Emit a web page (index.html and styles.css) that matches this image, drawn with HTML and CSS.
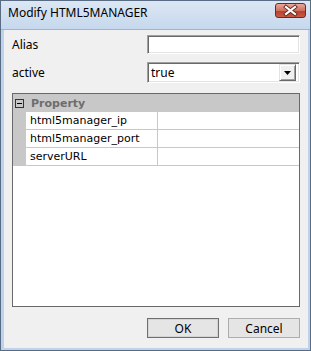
FILE: index.html
```html
<!DOCTYPE html>
<html lang="en">
<head>
    <meta charset="UTF-8">
    <title>Modify HTML5MANAGER</title>
    <link rel="stylesheet" href="styles.css">
</head>
<body>
    <div class="window">
        <!-- Titelleiste -->
        <div class="titlebar">
            <span class="title">Modify HTML5MANAGER</span>
            <span class="close">
                <svg width="29" height="13" viewBox="0 0 29 13">
                    <path d="M10 3 L19 10 M19 3 L10 10" stroke="#5e2a22" stroke-width="4" stroke-linecap="square" fill="none"/>
                    <path d="M10 3 L19 10 M19 3 L10 10" stroke="#fff" stroke-width="2.2" stroke-linecap="square" fill="none"/>
                </svg>
            </span>
        </div>

        <div class="frame">
            <div class="client">
                <div class="field">
                    <label>Alias</label>
                    <input class="textbox" type="text">
                </div>
                <div class="field">
                    <label>active</label>
                    <div class="combo">
                        <span class="combo-text">true</span>
                        <span class="combo-btn">
                            <svg width="7" height="4" viewBox="0 0 7 4"><path d="M0 0 H7 L3.5 4 Z" fill="#000"/></svg>
                        </span>
                    </div>
                </div>

                <!-- Eigenschaften -->
                <div class="grid">
                    <div class="grid-cat"><span class="toggle"></span>Property</div>
                    <div class="grid-row"><span class="grid-margin"></span><span class="grid-name">html5manager_ip</span><span class="grid-value"></span></div>
                    <div class="grid-row"><span class="grid-margin"></span><span class="grid-name">html5manager_port</span><span class="grid-value"></span></div>
                    <div class="grid-row"><span class="grid-margin"></span><span class="grid-name">serverURL</span><span class="grid-value"></span></div>
                </div>

                <div class="actions">
                    <button class="btn btn-default">OK</button>
                    <button class="btn">Cancel</button>
                </div>
            </div>
        </div>
    </div>
</body>
</html>
```

FILE: styles.css
```css
/* Dialog */
* { box-sizing: border-box; }
body { margin: 0; font-family: "Noto Sans", sans-serif; font-size: 12px; color: #000; background: #fff; }
.window { width: 311px; height: 351px; border: 1px solid #5a6c84; background: #bcd3eb; display: flex; flex-direction: column; }
.titlebar { height: 29px; display: flex; justify-content: space-between; align-items: flex-start; padding: 2px 4px 0 7px; background: linear-gradient(#dce7f4, #c6d8ed); border-bottom: 1px solid #9fb4ce; }
.title { line-height: 16px; padding-top: 2px; }
.close { width: 31px; height: 15px; border: 1px solid #6b2b25; border-radius: 3px; background: linear-gradient(#e9a99b, #d0705f 50%, #b9412f 55%, #c85a44); display: flex; }
.frame { flex: 1; display: flex; padding: 0 2px 2px 3px; }
.client { flex: 1; display: flex; flex-direction: column; background: #f0f0f0; padding: 5px 8px 10px 8px; }
.field { display: flex; align-items: center; justify-content: space-between; }
.field + .field { margin-top: 8px; }
.textbox { width: 153px; height: 19px; margin: 0; padding: 0 2px; font: inherit; background: #fff; border: 1px solid; border-color: #a0a0a0 #fff #fff #a0a0a0; box-shadow: inset 1px 1px 0 #696969, inset -1px -1px 0 #e3e3e3; outline: none; }
.combo { width: 153px; height: 21px; display: flex; align-items: center; justify-content: space-between; padding: 0 3px 0 3px; background: #fff; border: 1px solid; border-color: #a0a0a0 #fff #fff #a0a0a0; box-shadow: inset 1px 1px 0 #696969, inset -1px -1px 0 #e3e3e3; }
.combo-btn { width: 17px; height: 17px; display: flex; align-items: center; justify-content: center; background: #f0f0f0; border: 1px solid; border-color: #e3e3e3 #696969 #696969 #e3e3e3; box-shadow: inset 1px 1px 0 #fff, inset -1px -1px 0 #a0a0a0; }
.grid { flex: 1; margin: 10px 0 11px 0; border: 1px solid #696969; background: #fff; display: flex; flex-direction: column; font-family: "DejaVu Sans", sans-serif; font-size: 11px; }
.grid-cat { height: 18px; display: flex; align-items: center; background: #c8c8c8; color: #6d6d6d; font-weight: bold; }
.toggle { width: 9px; height: 9px; margin: 0 7px 0 2px; border: 1px solid #333; position: relative; }
.toggle::after { content: ""; position: absolute; left: 1px; right: 1px; top: 3px; height: 1px; background: #000; }
.grid-row { height: 18px; display: flex; border-bottom: 1px solid #c8c8c8; }
.grid-margin { width: 13px; background: #c8c8c8; }
.grid-name { width: 132px; padding-left: 4px; line-height: 17px; border-right: 1px solid #c8c8c8; }
.grid-value { flex: 1; }
.actions { display: flex; justify-content: flex-end; gap: 9px; }
.btn { width: 72px; height: 20px; padding: 0; font: inherit; color: #000; background: #e5e5e5; border: 1px solid #adadad; }
.btn-default { border-color: #6f6f6f; box-shadow: inset 0 0 0 1px #d4d4d4; }
```
